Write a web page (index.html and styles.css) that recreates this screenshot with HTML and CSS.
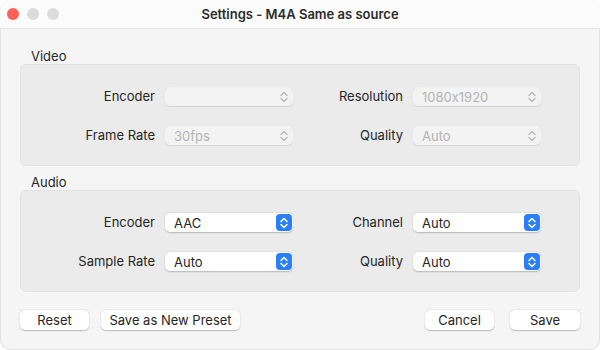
FILE: index.html
```html
<!DOCTYPE html>
<html lang="en">
<head>
    <meta charset="UTF-8">
    <meta name="viewport" content="width=device-width, initial-scale=1.0">
    <title>Settings - M4A Same as source</title>
    <link rel="stylesheet" href="styles.css">
</head>
<body>
    <div class="janela">
        <div class="barra-titulo">
            <div class="semaforo">
                <span class="luz fechar"></span>
                <span class="luz"></span>
                <span class="luz"></span>
            </div>
            <div class="titulo">Settings - M4A Same as source</div>
        </div>

        <div class="conteudo">
            <div class="secao">
                <div class="secao-nome">Video</div>
                <div class="painel">
                    <div class="campo-label">Encoder</div>
                    <div class="seletor desativado">
                        <span class="valor"></span>
                        <svg class="setas" width="8" height="12" viewBox="0 0 8 12"><path d="M1 4.5L4 1.5L7 4.5M1 7.5L4 10.5L7 7.5" fill="none" stroke="#b4b4b4" stroke-width="1.2" stroke-linecap="round" stroke-linejoin="round"/></svg>
                    </div>
                    <div class="campo-label">Resolution</div>
                    <div class="seletor desativado">
                        <span class="valor">1080x1920</span>
                        <svg class="setas" width="8" height="12" viewBox="0 0 8 12"><path d="M1 4.5L4 1.5L7 4.5M1 7.5L4 10.5L7 7.5" fill="none" stroke="#b4b4b4" stroke-width="1.2" stroke-linecap="round" stroke-linejoin="round"/></svg>
                    </div>
                    <div class="campo-label">Frame Rate</div>
                    <div class="seletor desativado">
                        <span class="valor">30fps</span>
                        <svg class="setas" width="8" height="12" viewBox="0 0 8 12"><path d="M1 4.5L4 1.5L7 4.5M1 7.5L4 10.5L7 7.5" fill="none" stroke="#b4b4b4" stroke-width="1.2" stroke-linecap="round" stroke-linejoin="round"/></svg>
                    </div>
                    <div class="campo-label">Quality</div>
                    <div class="seletor desativado">
                        <span class="valor">Auto</span>
                        <svg class="setas" width="8" height="12" viewBox="0 0 8 12"><path d="M1 4.5L4 1.5L7 4.5M1 7.5L4 10.5L7 7.5" fill="none" stroke="#b4b4b4" stroke-width="1.2" stroke-linecap="round" stroke-linejoin="round"/></svg>
                    </div>
                </div>
            </div>

            <div class="secao">
                <div class="secao-nome">Audio</div>
                <div class="painel">
                    <div class="campo-label">Encoder</div>
                    <div class="seletor">
                        <span class="valor">AAC</span>
                        <span class="botao-setas"><svg width="8" height="12" viewBox="0 0 8 12"><path d="M1 4.5L4 1.5L7 4.5M1 7.5L4 10.5L7 7.5" fill="none" stroke="#fff" stroke-width="1.5" stroke-linecap="round" stroke-linejoin="round"/></svg></span>
                    </div>
                    <div class="campo-label">Channel</div>
                    <div class="seletor">
                        <span class="valor">Auto</span>
                        <span class="botao-setas"><svg width="8" height="12" viewBox="0 0 8 12"><path d="M1 4.5L4 1.5L7 4.5M1 7.5L4 10.5L7 7.5" fill="none" stroke="#fff" stroke-width="1.5" stroke-linecap="round" stroke-linejoin="round"/></svg></span>
                    </div>
                    <div class="campo-label">Sample Rate</div>
                    <div class="seletor">
                        <span class="valor">Auto</span>
                        <span class="botao-setas"><svg width="8" height="12" viewBox="0 0 8 12"><path d="M1 4.5L4 1.5L7 4.5M1 7.5L4 10.5L7 7.5" fill="none" stroke="#fff" stroke-width="1.5" stroke-linecap="round" stroke-linejoin="round"/></svg></span>
                    </div>
                    <div class="campo-label">Quality</div>
                    <div class="seletor">
                        <span class="valor">Auto</span>
                        <span class="botao-setas"><svg width="8" height="12" viewBox="0 0 8 12"><path d="M1 4.5L4 1.5L7 4.5M1 7.5L4 10.5L7 7.5" fill="none" stroke="#fff" stroke-width="1.5" stroke-linecap="round" stroke-linejoin="round"/></svg></span>
                    </div>
                </div>
            </div>

            <div class="botoes">
                <button class="botao reset">Reset</button>
                <button class="botao preset">Save as New Preset</button>
                <span class="espaco"></span>
                <button class="botao cancelar">Cancel</button>
                <button class="botao salvar">Save</button>
            </div>
        </div>
    </div>
</body>
</html>
```

FILE: styles.css
```css
body {
    margin: 0;
    background-color: #ffffff;
    font-family: Inter, "Noto Sans", sans-serif;
    font-size: 13px;
    font-feature-settings: "calt" 0;
    color: #262626;
}

.janela {
    width: 600px;
    height: 350px;
    box-sizing: border-box;
    border-radius: 10px;
    background-color: #f5f5f5;
    box-shadow: inset 0 0 0 1px #e2e2e2;
    overflow: hidden;
}

.barra-titulo {
    height: 28px;
    background-color: #fbfbfb;
    border-bottom: 1px solid #e3e3e3;
    display: flex;
    align-items: center;
    position: relative;
}

.semaforo {
    display: flex;
    gap: 8px;
    padding-left: 7px;
}

.luz {
    width: 12px;
    height: 12px;
    border-radius: 50%;
    background-color: #dcdcdc;
}

.luz.fechar {
    background-color: #fe5f57;
}

.titulo {
    position: absolute;
    left: 0;
    right: 0;
    text-align: center;
    font-weight: 600;
    font-size: 13px;
    color: #2b2b2b;
}

.conteudo {
    padding: 20px 20px 0;
}

.secao-nome {
    padding-left: 11px;
    line-height: 15px;
}

.secao + .secao {
    margin-top: 9px;
}

.painel {
    height: 102px;
    box-sizing: border-box;
    background-color: #ebebeb;
    border: 1px solid #e1e1e1;
    border-radius: 6px;
    display: grid;
    grid-template-columns: 134px 128px 100px 128px;
    column-gap: 10px;
    row-gap: 20px;
    align-content: start;
    padding-top: 22px;
}

.campo-label {
    text-align: right;
    line-height: 19px;
}

.seletor {
    height: 19px;
    box-sizing: border-box;
    border-radius: 5px;
    background-color: #ffffff;
    box-shadow: 0 0.5px 1.5px rgba(0, 0, 0, 0.22);
    display: flex;
    align-items: center;
    justify-content: space-between;
    padding-left: 9px;
}

.seletor.desativado {
    background-color: #f3f3f3;
    color: #b3b3b3;
    box-shadow: 0 0.5px 1px rgba(0, 0, 0, 0.1);
    padding-right: 5px;
}

.botao-setas {
    width: 16px;
    height: 17px;
    margin-right: 1px;
    border-radius: 4px;
    background-color: #2a7ef7;
    display: flex;
    align-items: center;
    justify-content: center;
}

.botoes {
    display: flex;
    gap: 12px;
    margin-top: 18px;
}

.espaco {
    flex: 1;
}

.botao {
    height: 20px;
    padding: 0;
    border: none;
    border-radius: 5px;
    background-color: #ffffff;
    box-shadow: 0 0.5px 1.5px rgba(0, 0, 0, 0.25);
    font-family: Inter, "Noto Sans", sans-serif;
    font-size: 13px;
    color: #262626;
}

.reset {
    width: 69px;
}

.preset {
    width: 139px;
}

.cancelar {
    width: 69px;
}

.salvar {
    width: 70px;
    margin-left: 4px;
}
```
